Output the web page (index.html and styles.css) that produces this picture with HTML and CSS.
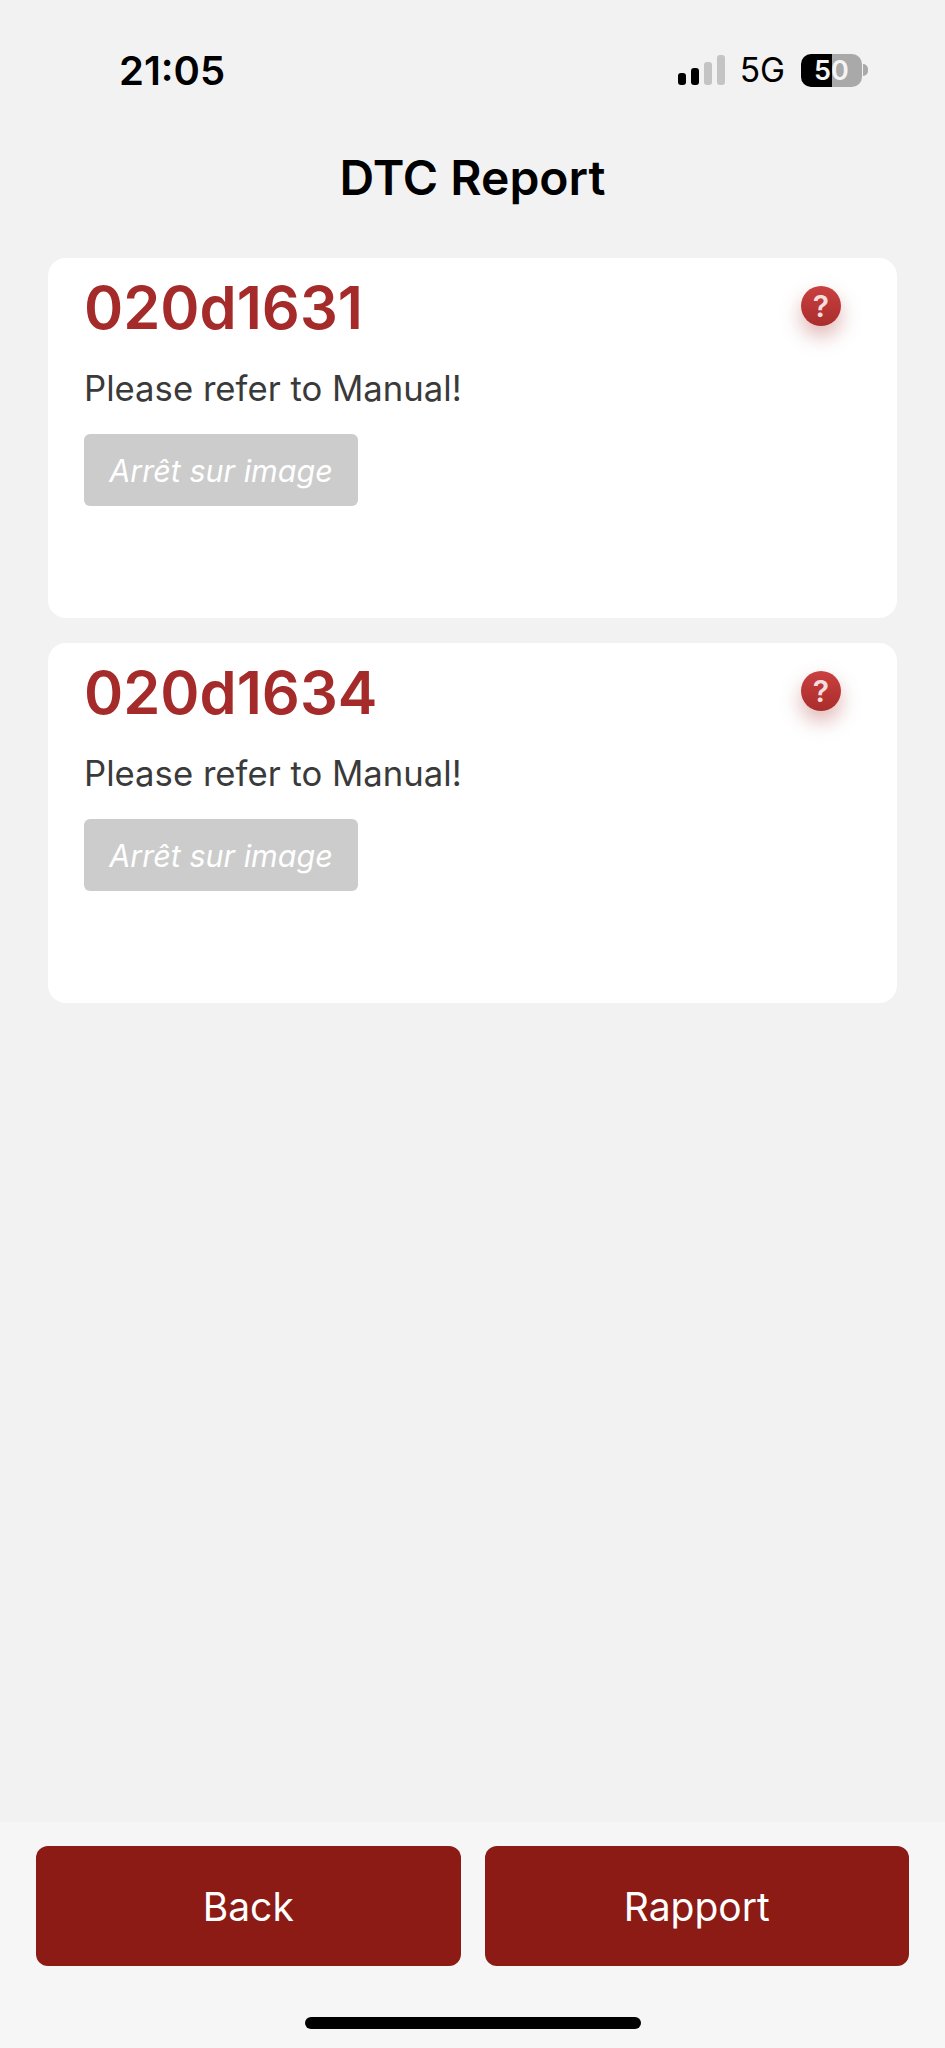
FILE: index.html
```html
<!DOCTYPE html>
<html lang="en">
<head>
  <meta charset="UTF-8">
  <meta name="viewport" content="width=device-width, initial-scale=1.0">
  <title>DTC Report</title>
  <link rel="stylesheet" href="styles.css">
</head>
<body>
  <div class="status-bar">
    <span class="time">21:05</span>
    <div class="status-right">
      <div class="signal">
        <span class="bar bar1 on"></span>
        <span class="bar bar2 on"></span>
        <span class="bar bar3"></span>
        <span class="bar bar4"></span>
      </div>
      <span class="network">5G</span>
      <div class="battery">
        <div class="battery-body">50</div>
        <span class="battery-tip"></span>
      </div>
    </div>
  </div>

  <h1 class="title">DTC Report</h1>

  <main class="list">
    <section class="card">
      <div class="card-head">
        <h2 class="code">020d1631</h2>
        <span class="help">?</span>
      </div>
      <p class="desc">Please refer to Manual!</p>
      <button class="freeze" type="button">Arrêt sur image</button>
    </section>
    <section class="card">
      <div class="card-head">
        <h2 class="code">020d1634</h2>
        <span class="help">?</span>
      </div>
      <p class="desc">Please refer to Manual!</p>
      <button class="freeze" type="button">Arrêt sur image</button>
    </section>
  </main>

  <footer class="footer">
    <div class="actions">
      <button class="action" type="button">Back</button>
      <button class="action" type="button">Rapport</button>
    </div>
    <div class="home-bar"></div>
  </footer>
</body>
</html>
```

FILE: styles.css
```css
* {
  box-sizing: border-box;
}
html, body {
  height: 100%;
}
body {
  margin: 0;
  display: flex;
  flex-direction: column;
  background: #f2f2f2;
  font-family: Inter, "Liberation Sans", sans-serif;
  color: #000;
}

/* status bar */
.status-bar {
  display: flex;
  justify-content: space-between;
  align-items: center;
  height: 58px;
  margin-top: 41px;
  padding: 0 77px 0 119px;
}
.time {
  font-size: 40px;
  font-weight: 600;
}
.status-right {
  display: flex;
  align-items: center;
}
.signal {
  display: flex;
  align-items: flex-end;
  gap: 5px;
  height: 30px;
  margin-right: 15px;
}
.bar {
  width: 8px;
  border-radius: 3px;
  background: #c4c4c4;
}
.bar.on {
  background: #000;
}
.bar1 { height: 12px; }
.bar2 { height: 17px; }
.bar3 { height: 23px; }
.bar4 { height: 30px; }
.network {
  font-size: 33.5px;
  margin-right: 16px;
}
.battery {
  display: flex;
  align-items: center;
}
.battery-body {
  width: 61px;
  height: 33px;
  border-radius: 10px;
  background: linear-gradient(to right, #000 50%, #a9a9a9 50%);
  color: #f4f4f4;
  font-size: 27px;
  font-weight: 600;
  line-height: 33px;
  text-align: center;
}
.battery-tip {
  width: 5px;
  height: 12px;
  margin-left: 1px;
  border-radius: 0 6px 6px 0;
  background: #a9a9a9;
}

.title {
  margin: 49px 0 0;
  font-size: 48px;
  font-weight: 600;
  line-height: 60px;
  text-align: center;
}

/* cards */
.list {
  flex: 1;
  display: flex;
  flex-direction: column;
  gap: 25px;
  padding: 50px 48px 0;
}
.card {
  height: 360px;
  padding: 0 36px;
  border-radius: 18px;
  background: #fff;
}
.card-head {
  display: flex;
  justify-content: space-between;
  align-items: center;
  height: 97px;
}
.code {
  margin: 0;
  color: #a52a2a;
  font-size: 59.5px;
  font-weight: 600;
  line-height: 70px;
}
.help {
  width: 40px;
  height: 40px;
  margin-right: 20px;
  margin-bottom: 2px;
  border-radius: 50%;
  background: linear-gradient(#c9403f, #a92d2c);
  box-shadow: 0 10px 20px rgba(165, 42, 42, 0.35);
  color: #f6dddd;
  font-size: 30px;
  font-weight: 600;
  line-height: 40px;
  text-align: center;
}
.desc {
  margin: 0;
  padding-top: 12px;
  color: #3a3a3a;
  font-size: 34.7px;
  line-height: 42px;
}
.freeze {
  display: block;
  width: 274px;
  height: 72px;
  margin-top: 25px;
  border: none;
  border-radius: 6px;
  background: #cccccc;
  color: #fff;
  font-family: inherit;
  font-size: 30.5px;
  font-style: italic;
}

/* bottom buttons */
.footer {
  height: 226px;
  padding: 24px 36px 0;
  background: #f6f6f6;
}
.actions {
  display: flex;
  gap: 24px;
}
.action {
  flex: 1;
  height: 120px;
  border: none;
  border-radius: 12px;
  background: #8c1a15;
  color: #fff;
  font-family: inherit;
  font-size: 39px;
}
.home-bar {
  width: 336px;
  height: 12px;
  margin: 51px auto 0;
  border-radius: 6px;
  background: #000;
}
```
